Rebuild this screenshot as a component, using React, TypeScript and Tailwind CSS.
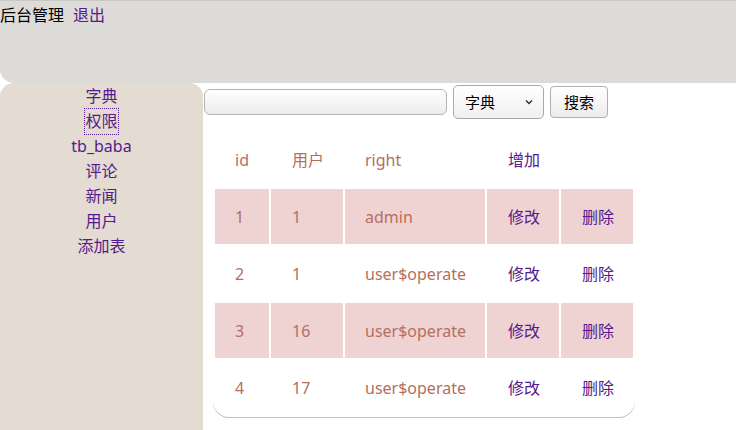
const rows = [
  { id: "1", user: "1", right: "admin" },
  { id: "2", user: "1", right: "user$operate" },
  { id: "3", user: "16", right: "user$operate" },
  { id: "4", user: "17", right: "user$operate" },
];

const menu = ["字典", "权限", "tb_baba", "评论", "新闻", "用户", "添加表"];

const App = () => {
  return (
    <div className="w-[736px] h-[430px] overflow-hidden bg-white text-[16px] font-['Noto_Sans','Noto_Sans_CJK_SC',sans-serif]">
      <div className="h-[83px] border-t border-[#c9c8c5] bg-[#dcdbd8] rounded-bl-[14px] flex items-start pt-[3px] leading-[23px]">
        <span className="text-black">后台管理</span>
        <a className="ml-[9px] text-[#551a8b] cursor-pointer">退出</a>
      </div>

      <div className="flex">
        <div className="w-[203px] h-[347px] bg-[#e4dbd2] rounded-t-[14px] flex flex-col items-center pt-[1px] leading-[25px]">
          {menu.map((m) => (
            <a
              key={m}
              className={
                m === "权限"
                  ? "text-[#551a8b] outline outline-1 outline-dotted outline-[#551a8b] cursor-pointer"
                  : "text-[#551a8b] cursor-pointer"
              }
            >
              {m}
            </a>
          ))}
        </div>

        <div className="flex-1 pl-[1px]">
          <div className="flex items-center h-[37px] pt-[1px]">
            <input className="w-[243px] h-[26px] rounded-[6px] border border-[#b4b4b4] bg-gradient-to-b from-white to-[#ececec]" />
            <div className="ml-[6px] w-[91px] h-[34px] rounded-[5px] border border-[#a9a9a9] bg-gradient-to-b from-white to-[#f0f0f0] flex items-center justify-between pl-[11px] pr-[9px] text-[15px] text-black">
              <span>字典</span>
              <svg width="10" height="10" viewBox="0 0 10 10">
                <path d="M2 3.5 L5 6.5 L8 3.5" fill="none" stroke="#333" strokeWidth="1.5" />
              </svg>
            </div>
            <button className="ml-[6px] w-[58px] h-[32px] rounded-[4px] border border-[#b0b0b0] bg-gradient-to-b from-white to-[#ececec] text-[15px] text-black">
              搜索
            </button>
          </div>

          <div className="ml-[9px] mt-[10px] w-[422px] rounded-b-[16px] shadow-[0_1px_0_#dcb4b4]">
            <table className="border-separate border-spacing-[2px] text-[#b56f60] text-left">
              <thead>
                <tr className="h-[55px]">
                  <th className="w-[54px] pl-5 font-normal">id</th>
                  <th className="w-[72px] pl-[21px] font-normal">用户</th>
                  <th className="w-[140px] pl-5 font-normal">right</th>
                  <th className="w-[72px] pl-[21px] font-normal">
                    <a className="text-[#551a8b]">增加</a>
                  </th>
                  <th className="w-[72px]" />
                </tr>
              </thead>
              <tbody>
                {rows.map((r, i) => (
                  <tr key={r.id} className={i % 2 === 0 ? "h-[55px] bg-[#efd3d3]" : "h-[55px]"}>
                    <td className="pl-5">{r.id}</td>
                    <td className="pl-[21px]">{r.user}</td>
                    <td className="pl-5">{r.right}</td>
                    <td className="pl-[21px]">
                      <a className="text-[#551a8b]">修改</a>
                    </td>
                    <td className="pl-[21px]">
                      <a className="text-[#551a8b]">删除</a>
                    </td>
                  </tr>
                ))}
              </tbody>
            </table>
          </div>
        </div>
      </div>
    </div>
  );
};

export default App;
